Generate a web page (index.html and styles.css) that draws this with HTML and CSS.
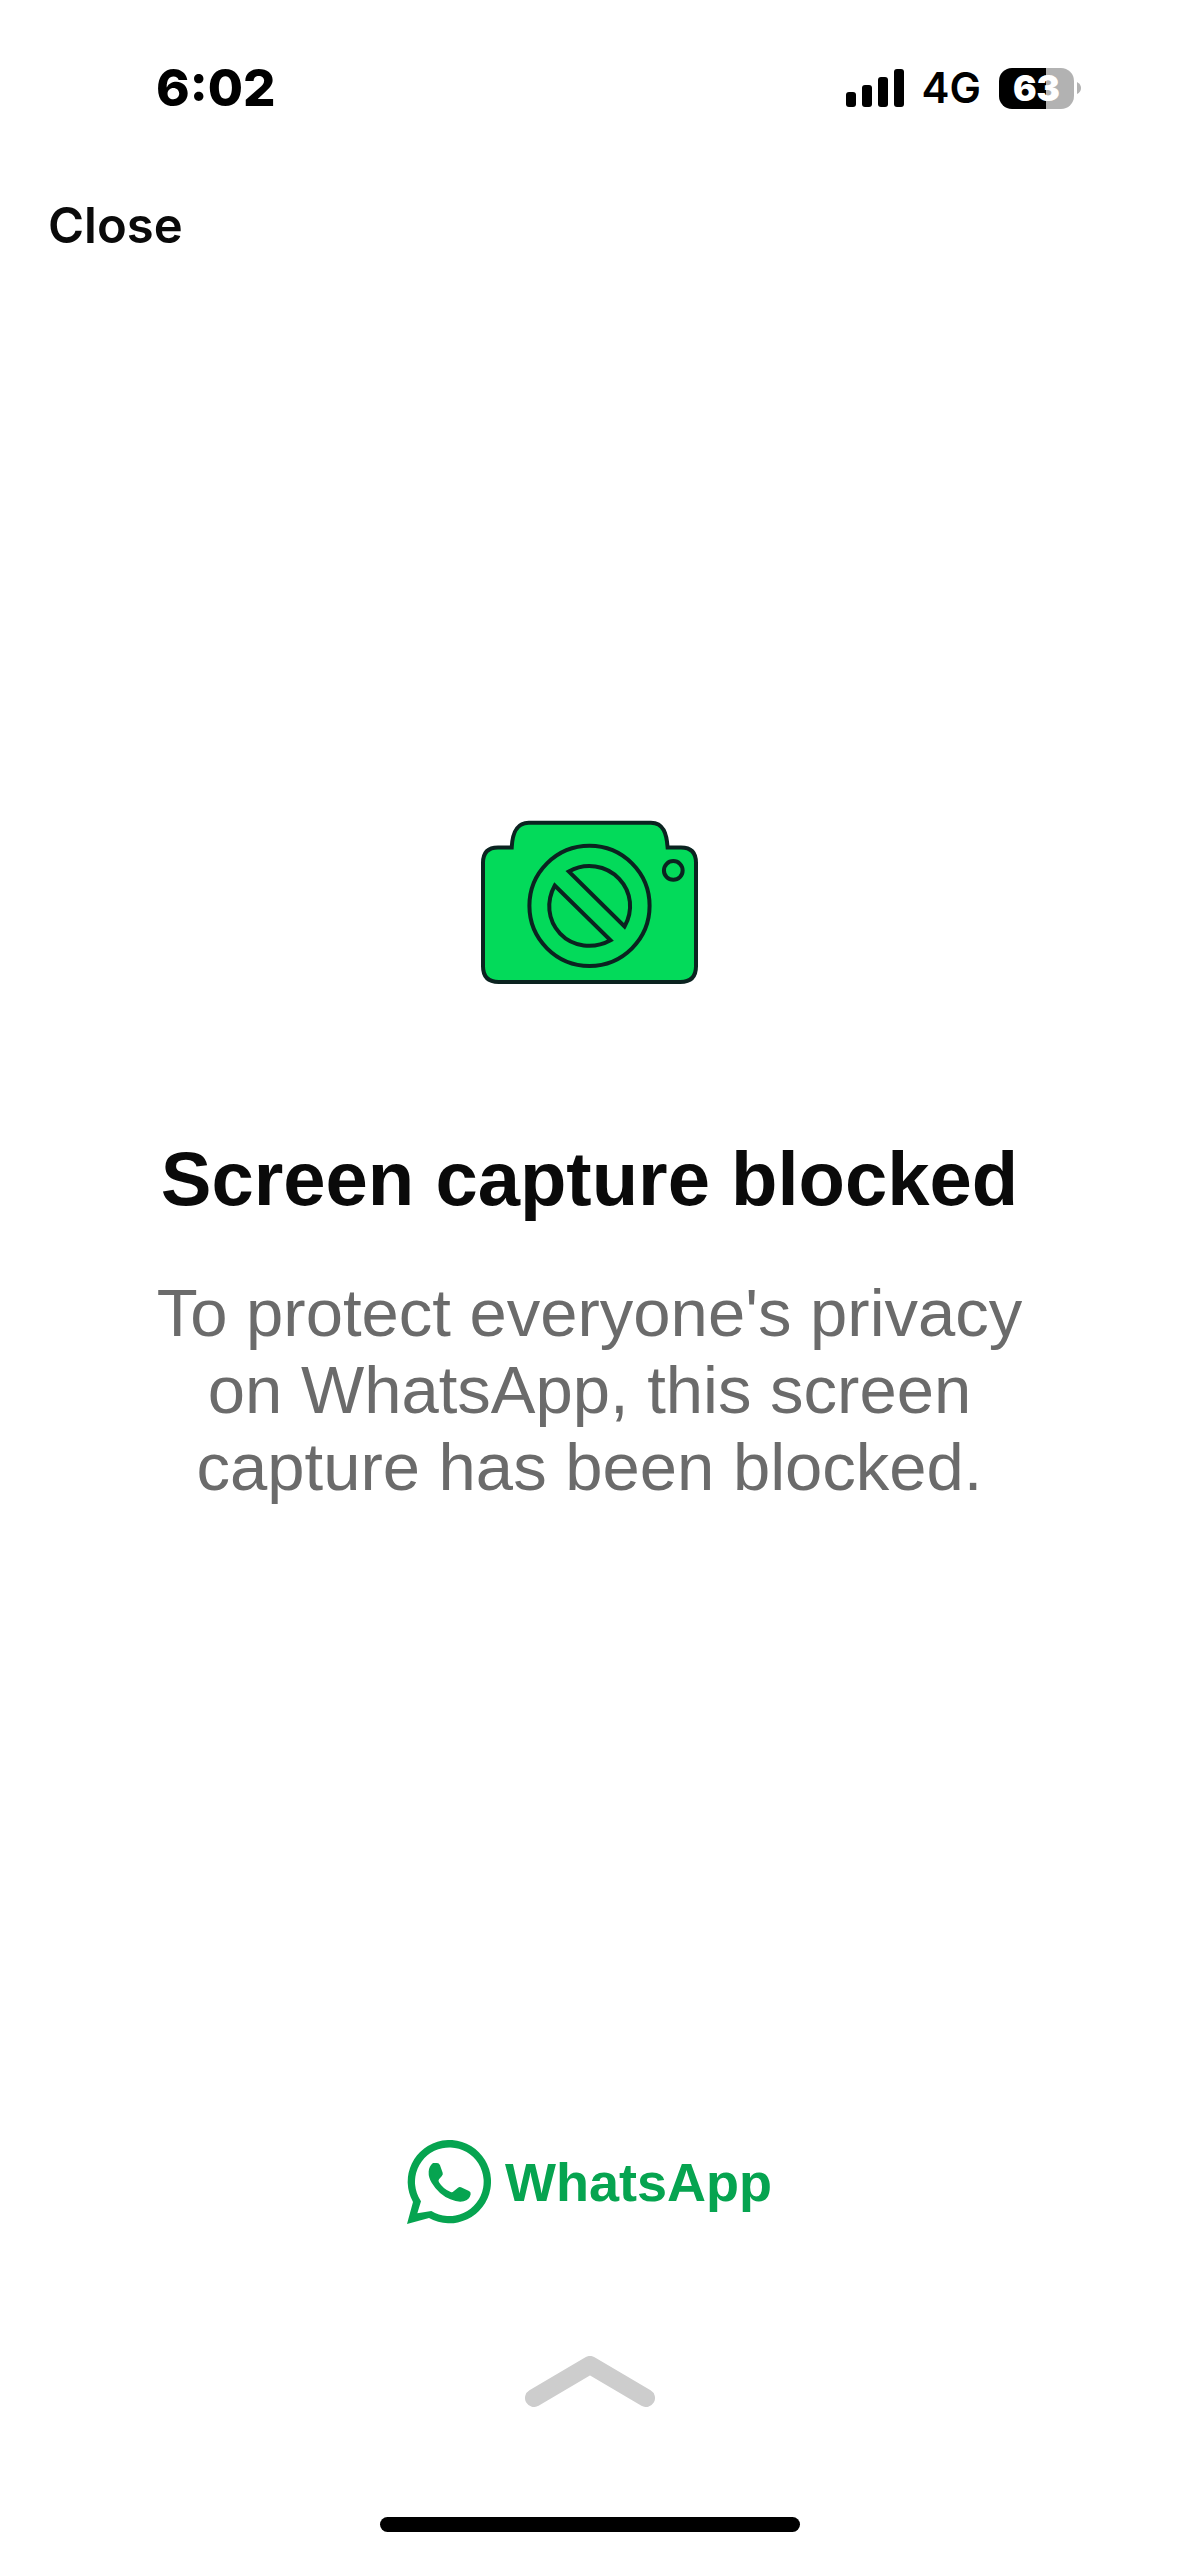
FILE: index.html
```html
<!DOCTYPE html>
<html lang="en">
<head>
  <meta charset="utf-8">
  <meta name="viewport" content="width=device-width, initial-scale=1">
  <title>Screen capture blocked</title>
  <link rel="stylesheet" href="styles.css">
</head>
<body>
  <div class="screen">
    <div class="status-bar">
      <time class="clock">6:02</time>
      <div class="status-icons">
        <svg class="signal" viewBox="0 0 58 38" aria-hidden="true">
          <rect x="0" y="23" width="10" height="15" rx="3"/>
          <rect x="16" y="16" width="10" height="22" rx="3"/>
          <rect x="32" y="8" width="10" height="30" rx="3"/>
          <rect x="48" y="0" width="10" height="38" rx="3"/>
        </svg>
        <span class="network">4G</span>
        <div class="battery">
          <span class="battery-level">63</span>
          <svg class="battery-cap" viewBox="0 0 4 12" aria-hidden="true"><path d="M0 0Q4 2 4 6T0 12Z"/></svg>
        </div>
      </div>
    </div>

    <header class="nav">
      <button class="close" type="button">Close</button>
    </header>

    <main class="message">
      <svg class="camera" viewBox="65 62 650 491" aria-hidden="true">
        <path class="camera-body" d="M157 144C159 106 168 70 208 70H574C612 70 621 104 624 144H664Q709 144 709 190V500Q709 547 662 547H118Q71 547 71 500V190Q71 144 116 144Z"/>
        <circle cx="390" cy="319" r="180"/>
        <circle cx="641" cy="213" r="28"/>
        <path d="M328 216C378 188 440 197 479 238C517 278 521 335 495 381Z"/>
        <path d="M286 258C260 305 264 362 302 402C340 442 402 450 453 422Z"/>
      </svg>
      <h1 class="title">Screen capture blocked</h1>
      <p class="description">To protect everyone's privacy on WhatsApp, this screen capture has been blocked.</p>
    </main>

    <footer class="footer">
      <div class="brand">
        <svg class="brand-icon" viewBox="54 56 252 252" aria-hidden="true">
          <path fill-rule="evenodd" d="M54 308L72 242A125 125 0 1 1 120 290ZM85 276L127 269A103 103 0 1 0 95 238L96 240Z"/>
          <path d="M132 125H144Q150 125 153 132L161 154Q163 159 158 165L150 174Q147 178 150 183Q163 204 185 212Q190 214 194 210L207 199Q211 196 216 198L240 209Q246 212 245 219Q242 235 224 240Q207 244 184 234Q149 219 128 184Q118 168 119 151Q120 134 132 125Z"/>
        </svg>
        <span class="brand-name">WhatsApp</span>
      </div>
      <svg class="chevron" viewBox="0 0 130 51" aria-hidden="true"><path d="M9 42L65 9L121 42"/></svg>
      <div class="home-indicator"></div>
    </footer>
  </div>
</body>
</html>
```
FILE: styles.css
```css
* {
  box-sizing: border-box;
}

body {
  margin: 0;
  background: #fff;
  color: #0a0a0a;
  font-family: "Liberation Sans", Arial, sans-serif;
}

.screen {
  display: flex;
  flex-direction: column;
  min-height: 100vh;
}

.status-bar {
  display: flex;
  align-items: center;
  justify-content: space-between;
  padding: 56px 98px 0 156px;
  color: #000;
  font-family: Inter, sans-serif;
  line-height: 64px;
}

.clock {
  font-size: 51px;
  font-weight: 800;
}

.status-icons {
  display: flex;
  align-items: center;
}

.signal {
  width: 58px;
  height: 38px;
}

.network {
  margin: 0 18px;
  font-size: 42px;
  font-weight: 600;
}

.battery {
  display: flex;
  align-items: center;
  gap: 3px;
}

.battery-level {
  width: 75px;
  border-radius: 13px;
  background: linear-gradient(to right, #000 63%, #b2b2b2 63%);
  color: #fff;
  font-size: 35px;
  font-weight: 900;
  line-height: 41px;
  text-align: center;
}

.battery-cap {
  width: 4px;
  height: 12px;
  fill: #b2b2b2;
}

.nav {
  display: flex;
  padding: 70px 48px;
}

.close {
  padding: 0;
  border: 0;
  background: none;
  color: #0a0a0a;
  font-family: Inter, sans-serif;
  font-size: 49px;
  font-weight: 600;
  line-height: 72px;
}

.message {
  display: flex;
  flex: 1;
  flex-direction: column;
  align-items: center;
  justify-content: center;
  padding: 0 144px 148px;
  text-align: center;
}

.camera {
  width: 217px;
  height: 164px;
  fill: none;
  stroke: #0b2320;
  stroke-width: 12;
}

.camera-body {
  fill: #03da5a;
}

.title {
  margin: 147px 0 47px;
  font-size: 76px;
  font-weight: 700;
  line-height: 96px;
}

.description {
  max-width: 891px;
  margin: 0;
  color: #6b6b6b;
  font-size: 67px;
  line-height: 77px;
}

.footer {
  display: flex;
  flex-direction: column;
  align-items: center;
  padding-bottom: 24px;
}

.brand {
  display: flex;
  align-items: center;
  gap: 14px;
  color: #06a450;
}

.brand-icon {
  width: 84px;
  height: 84px;
  fill: currentColor;
}

.brand-name {
  font-size: 54px;
  font-weight: 700;
  line-height: 84px;
}

.chevron {
  width: 130px;
  height: 51px;
  margin: 132px 0 110px;
  fill: none;
  stroke: #cdcdcd;
  stroke-width: 18;
  stroke-linecap: round;
  stroke-linejoin: round;
}

.home-indicator {
  width: 420px;
  max-width: 60%;
  height: 15px;
  border-radius: 8px;
  background: #000;
}
```
